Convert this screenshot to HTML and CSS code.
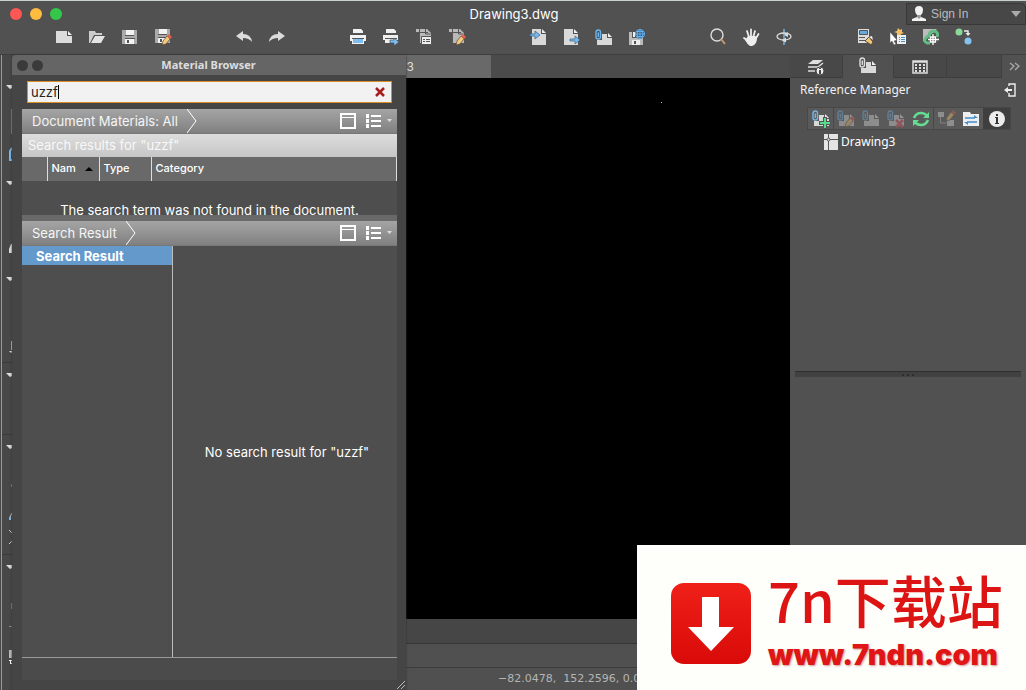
FILE: index.html
```html
<!DOCTYPE html>
<html lang="en">
<head>
<meta charset="utf-8">
<title>Drawing3.dwg</title>
<link rel="stylesheet" href="styles.css">
</head>
<body>
<svg class="defs" aria-hidden="true">
  <defs>
    <g id="page"><path fill="#dcdcdc" d="M2 4h11v5h5v7H2z"/><path fill="#eee" d="M14 4l4 4h-4z"/></g>
    <g id="floppy"><path fill="#aaa" d="M2 2h15v14H2z"/><path fill="#f2f2f2" d="M6 2h8v5H6zM5 11h9v5H5z"/><path fill="#555" d="M5 7h9v1H5zM7 12h2v3H7zM5 10h10v1H5z"/></g>
    <g id="pencil"><path fill="#f3c97d" stroke="#5a4630" stroke-width=".7" d="M9 18l1-4 4-5 3 3-4 5z"/><path fill="#df634f" d="M14 9l2-2 3 3-2 2z"/></g>
    <g id="clip"><path fill="none" stroke-width="1.400" d="M6.500 9V4.500q0-2.500-2.200-2.500T2 4.500V9q0 2 2.200 2t2.300-2M4.300 4.500v4.500"/></g>
    <g id="sheet"><path fill="#d9d9d9" d="M8 6h5v4h5v7H3v-5h5z"/><path fill="#eee" d="M14 5l4 4h-4z"/></g>
    <g id="grid"><path fill="#b9b9b9" d="M2 2h11l4 4v10H5V5H2z"/><path fill="none" stroke="#555" d="M5.500 1v16M2 5.500h12M11.500 2v5h5"/></g>
    <g id="list-window"><rect x="1" y="1" width="14" height="14" fill="none" stroke="#fff" stroke-width="2"/><path fill="#fff" d="M1 4h14v1H1z"/></g>
    <g id="list-rows"><path fill="#fff" d="M0 1h3v4H0zM0 6h3v4H0zM0 11h3v4H0zM5 2h10v2H5zM5 7h10v2H5zM5 12h10v2H5z"/><path fill="#ddd" d="M21 6h5l-2.500 3z"/></g>
  </defs>
</svg>
<div class="app">
  <header class="header">
    <div class="titlebar">
      <div class="lights"><button class="light red" aria-label="Close"></button><button class="light yellow" aria-label="Minimize"></button><button class="light green" aria-label="Zoom"></button></div>
      <h1 class="doc-title">Drawing3.dwg</h1>
      <button class="signin">
        <svg width="16" height="16" viewBox="0 0 16 16"><path fill="#f2f2f2" d="M8 0q4 0 4 4 0 3-2 5v2l5 2v2H1v-2l5-2V9Q4 7 4 4q0-4 4-4z"/><path fill="#999" d="M6 9h4v2L8 13l-2-2z"/></svg>
        <span>Sign In</span>
        <svg class="signin-caret" width="10" height="6"><path fill="#aaa" d="M0 0h10L5 6z"/></svg>
      </button>
    </div>
    <nav class="toolbar" aria-label="Toolbar">
      <div class="group">
        <button aria-label="New"><svg viewBox="0 0 20 20"><use href="#page"/></svg></button>
        <button aria-label="Open"><svg viewBox="0 0 20 20"><path fill="#ccc" d="M2 4h6l1 2h6v2H7l-4 8H2z"/><path fill="#e4e4e4" d="M8 9h10l-4 7H4z"/></svg></button>
        <button aria-label="Save"><svg viewBox="0 0 20 20"><use href="#floppy" y="1"/></svg></button>
        <button aria-label="Save as"><svg viewBox="0 0 20 20"><use href="#floppy"/><use href="#pencil"/></svg></button>
      </div>
      <div class="group">
        <button aria-label="Undo"><svg viewBox="0 0 20 20"><path fill="#dcdcdc" d="M2 9l7-5v3q8 0 9 8-3-4-9-4v3z"/></svg></button>
        <button aria-label="Redo"><svg viewBox="0 0 20 20"><path fill="#dcdcdc" d="M18 9l-7-5v3q-8 0-9 8 3-4 9-4v3z"/></svg></button>
      </div>
      <div class="group">
        <button aria-label="Print"><svg viewBox="0 0 20 20"><path fill="#f2f2f2" d="M5 2h8l2 2v3H5zM2 8h16v6H2zM4 13h12v4H4z"/><path fill="#555" d="M4 6h12v1H4zM4 11h12v1H4z"/><path fill="#7dbdf0" d="M5 12h10v4H5z"/></svg></button>
        <button aria-label="Batch print"><svg viewBox="0 0 20 20"><path fill="#eee" d="M5 2h8l2 2v3H5zM2 8h15v5H2zM4 12h6v4H4z"/><path fill="#555" d="M4 6h12v1H4zM4 11h12v1H4z"/><path fill="#7dbdf0" stroke="#4a5258" stroke-width=".7" d="M9 13h4v-2l5 4-5 4v-3H9z"/></svg></button>
        <button aria-label="Page setup"><svg viewBox="0 0 20 20"><use href="#grid"/><path fill="#eee" stroke="#555" d="M7.500 9.500h10v8h-10z"/><path fill="#555" d="M9 12h2v1H9zM12 12h4v1h-4zM9 14h2v1H9zM12 14h4v1h-4z"/></svg></button>
        <button aria-label="Edit layout"><svg viewBox="0 0 20 20"><use href="#grid"/><use href="#pencil"/></svg></button>
      </div>
      <div class="group">
        <button aria-label="Import"><svg viewBox="0 0 20 20"><path fill="#d9d9d9" d="M4 2h9v5h5v11H4z"/><path fill="#eee" d="M14 2l4 4h-4z"/><path fill="#78baf0" stroke="#356187" stroke-width=".7" d="M2 7h5V4l5 4-5 4v-3H2z"/></svg></button>
        <button aria-label="Export"><svg viewBox="0 0 20 20"><path fill="#d9d9d9" d="M3 2h9v5h5v11H3z"/><path fill="#eee" d="M13 2l4 4h-4z"/><path fill="#78baf0" stroke="#356187" stroke-width=".7" d="M9 12h5V9l5 4-5 4v-3H9z"/></svg></button>
        <button aria-label="Attach"><svg viewBox="0 0 20 20"><use href="#sheet" y="1"/><use href="#clip" y="1" stroke="#6eb4ea"/></svg></button>
        <button aria-label="Save to web"><svg viewBox="0 0 20 20"><path fill="#bbb" d="M2 5h14v13H2z"/><path fill="#555" d="M5 5h5v6H5z"/><path fill="#eee" d="M6 5h2v5H6zM5 13h8v5H5z"/><path fill="#555" d="M7 14h2v3H7z"/><circle cx="13" cy="7" r="5" fill="#315878"/><circle cx="13" cy="7" r="4.500" fill="none" stroke="#66aee8"/><path fill="none" stroke="#66aee8" d="M8.500 7h9M9 4.500h8M9 9.500h8M13 2v10M11 3q-2 4 0 8M15 3q2 4 0 8"/></svg></button>
      </div>
      <div class="group">
        <button aria-label="Zoom"><svg viewBox="0 0 20 20"><circle cx="9" cy="8" r="6" fill="none" stroke="#ddd" stroke-width="1.400"/><path stroke="#c79a6c" stroke-width="2" d="M13 12l4 5"/></svg></button>
        <button aria-label="Pan"><svg viewBox="0 0 20 20"><path fill="none" stroke="#eee" stroke-width="1.800" stroke-linecap="round" d="M8 10L6 4M10 9V2.500M12.500 9L14 4M14.500 12l3-5M7 14l-4-3"/><path fill="#eee" d="M7 9h7l2 1q0 8-5 9H9q-3-2-5-6z"/></svg></button>
        <button aria-label="Orbit"><svg viewBox="0 0 20 20"><path stroke="#78b5df" stroke-width="1.500" d="M10 2v16"/><ellipse cx="10" cy="9.500" rx="7" ry="3.500" fill="none" stroke="#ddd" stroke-width="1.300"/><path fill="#ddd" d="M14 5v5l-4-2zM12 10.500v5l-4-2z"/></svg></button>
      </div>
      <div class="group">
        <button aria-label="Match properties"><svg viewBox="0 0 20 20"><path fill="#ddd" d="M3 2h11v14H3z"/><path fill="#65abdd" stroke="#555" d="M4.500 3.500h8v4h-8z"/><path fill="#555" d="M4 10h6v1H4zM4 13h6v1H4z"/><path fill="#f0c778" stroke="#5d4e3a" d="M10 14l4-4 4 5-2 3q-2-2-6-4z"/><path fill="#eee" d="M14 10l3-1 1 4z"/></svg></button>
        <button aria-label="Quick select"><svg viewBox="0 0 20 20"><path fill="#f2bf65" d="M10 1l2 2 2-1v3l2 1-3 1-1 2-3-1V6L6 5l3-1z"/><path fill="#eee" d="M9 8h9v9H9z"/><path fill="#4c91c4" d="M11 10h1v1h-1zM13 10h4v1h-4zM11 12h1v1h-1zM13 12h4v1h-4zM11 14h1v1h-1zM13 14h4v1h-4z"/><path fill="#fff" stroke="#555" stroke-width=".5" d="M2 5l7 8-3 1 2 3-2 1-2-4-2 2z"/></svg></button>
        <button aria-label="Snap"><svg viewBox="0 0 20 20"><path fill="#bcbcbc" d="M2 2h14L2 15z"/><path fill="none" stroke="#62bd82" stroke-width="3" d="M9 16H6q-4-2-1-5 1-2 3-2 0-5 5-5 5 1 3 6"/><path fill="none" stroke="#fff" stroke-width="1.300" d="M12 7v11M7 12.500h11M9.500 10h5v5h-5z"/></svg></button>
        <button aria-label="Convert"><svg viewBox="0 0 20 20"><circle cx="5" cy="5" r="3.500" fill="#8bd998"/><circle cx="14" cy="14" r="3.500" fill="#84c3f0"/><path fill="none" stroke="#eee" stroke-width="1.400" d="M10 4h4v3"/><path fill="#eee" d="M11.500 6h5L14 9z"/></svg></button>
      </div>
    </nav>
  </header>

  <div class="main">
    <aside class="rail">
      <svg width="13" height="635" viewBox="0 55 13 635">
        <path fill="#999" d="M1 55h1v635H1z"/>
        <path fill="#ddd" d="M6 85h6v3l-2 1zM6 181h6v3l-2 1zM6 277h6v3l-2 1zM6 373h6v3l-2 1zM6 445h6v3l-2 1zM6 565h6v3l-2 1z"/>
        <path fill="#888" d="M11 109h1v25h-1zM11 484h1v3h-1zM11 603h1v6h-1zM9 626h3v1H9z"/>
        <path fill="none" stroke="#7ab9ea" stroke-width="2" d="M12 148l-2 3v9h2"/>
        <path fill="#ddd" d="M11 244h1v9H9v-4zM9 351h3v1l-1 1z"/><path fill="#d6cf8a" d="M11 341h1v9h-1z"/>
        <path stroke="#ccc" d="M12 513l-2 4M9 530l3 3M9 544l3-3"/><path fill="#7ab9ea" d="M9 517h2v3H9z"/>
        <path fill="#bbb" d="M9 650h3v8H9z"/><path fill="#fff" d="M9 660h3v1h-1v2h1v1h-2v-3H9z"/>
        <path fill="#3b3b3b" d="M2 362h11v1H2zM2 434h11v1H2zM2 554h11v1H2z"/>
      </svg>
    </aside>

    <main class="workspace">
      <div class="doc-tabs"><button class="doc-tab">3</button></div>
      <div class="canvas" aria-label="Drawing canvas"><span class="point"></span></div>
      <div class="canvas-foot"></div>
      <div class="command-line"></div>
      <footer class="coords">−82.0478,&nbsp; 152.2596, 0.0</footer>
    </main>

    <aside class="side">
      <div class="side-tabs">
        <button aria-label="Layers"><svg viewBox="0 0 20 20"><path fill="#ddd" d="M7 3h10l-5 4H2z"/><path fill="none" stroke="#ddd" stroke-width="1.500" d="M2 10h10l5-4M2 14h7"/><circle cx="14" cy="14" r="4" fill="#eee" stroke="#484848"/><path fill="#444" d="M13 11h2v1h-2zM13 13h2v4h-2z"/></svg></button>
        <button class="current" aria-label="Reference manager"><svg viewBox="0 0 20 20"><use href="#sheet" y="-1"/><use href="#clip" y="-1" stroke="#ddd"/></svg></button>
        <button aria-label="Tool sets"><svg viewBox="0 0 20 20"><path fill="none" stroke="#ddd" stroke-width="1.500" d="M3 4h14v12H3zM3 5h14"/><path fill="#ddd" d="M5 7h2v2H5zM9 7h2v2H9zM13 7h2v2h-2zM5 10h2v2H5zM9 10h2v2H9zM13 10h2v2h-2zM5 13h2v2H5zM9 13h2v2H9zM13 13h2v2h-2z"/></svg></button>
        <span class="blank"></span>
        <button class="more" aria-label="More"><svg viewBox="0 0 20 20"><path fill="none" stroke="#aaa" stroke-width="1.300" d="M6 6l4 3-4 4M11 6l4 3-4 4"/></svg></button>
      </div>
      <div class="side-head">
        <h2>Reference Manager</h2>
        <button aria-label="Collapse"><svg width="14" height="16" viewBox="0 0 14 16"><path fill="none" stroke="#eee" stroke-width="1.400" d="M6 4V2h6v12H6v-3"/><path fill="#eee" d="M1 8l4-3v2h4v2H5v2z"/></svg></button>
      </div>
      <div class="ref-tools">
        <button aria-label="Attach reference"><svg viewBox="0 0 20 20"><use href="#sheet"/><use href="#clip" stroke="#75b5e6"/><path stroke="#51555a" stroke-width="4" d="M14 8v12M8 14h12"/><path stroke="#58dc86" stroke-width="2" d="M14 9v10M9 14h10"/></svg></button>
        <button class="off split" aria-label="Edit reference"><svg viewBox="0 0 20 20"><use href="#sheet"/><use href="#clip" stroke="#75b5e6"/><use href="#pencil"/></svg></button>
        <button class="off" aria-label="Open reference"><svg viewBox="0 0 20 20"><use href="#sheet"/><use href="#clip" stroke="#75b5e6"/></svg></button>
        <button class="off" aria-label="Detach reference"><svg viewBox="0 0 20 20"><use href="#sheet"/><use href="#clip" stroke="#75b5e6"/><path stroke="#e35260" stroke-width="2.500" d="M10 11l7 7M17 11l-7 7"/></svg></button>
        <button aria-label="Refresh"><svg viewBox="0 0 20 20"><path fill="none" stroke="#65dc91" stroke-width="2.500" d="M3 9q2-5 7-5 4 0 6 3M17 11q-2 5-7 5-4 0-6-3"/><path fill="#65dc91" d="M18 3v6h-6zM2 17v-6h6z"/></svg></button>
        <button class="off split" aria-label="Change path"><svg viewBox="0 0 20 20"><path fill="#ddd" d="M2 3h6v5H2zM11 11h7v6h-7z"/><path fill="none" stroke="#bbb" d="M4.500 8v6h6"/><use href="#pencil" x="1" y="-6"/></svg></button>
        <button aria-label="Show tree"><svg viewBox="0 0 20 20"><path fill="#eee" d="M2 3h7l1 2h8v12H2z"/><path fill="none" stroke="#428ccc" stroke-width="1.400" d="M4 9h10M6 13h10"/><path fill="#428ccc" d="M13 6l4 3h-4zM7 16l-4-3h4z"/></svg></button>
        <button class="pressed" aria-label="Details"><svg viewBox="0 0 20 20"><circle cx="10" cy="10" r="8" fill="#ececec"/><path fill="#333" d="M9 5h2v2H9zM8 8h3v6h1v1H8v-1h1V9H8z"/></svg></button>
      </div>
      <div class="ref-item"><svg width="14" height="16" viewBox="0 0 14 16"><path fill="#e4e4e4" d="M0 0h14v16H0z"/><path fill="none" stroke="#555" d="M4.500 0v16M0 5.500h14"/><circle cx="4.500" cy="5.500" r="1.500" fill="#ddd" stroke="#555"/></svg><span>Drawing3</span></div>
      <div class="splitter"><i></i><i></i><i></i></div>
    </aside>
  </div>

  <section class="palette" aria-label="Material Browser">
    <header class="palette-title">
      <button class="dot" aria-label="Close palette"></button><button class="dot" aria-label="Minimize palette"></button>
      <h2>Material Browser</h2>
    </header>
    <div class="palette-body">
      <div class="search">
        <input type="text" value="uzzf" aria-label="Search materials">
        <span class="caret"></span>
        <button aria-label="Clear search"><svg width="12" height="12" viewBox="0 0 12 12"><path stroke="#a61e1e" stroke-width="2.500" d="M2 2l8 8M10 2l-8 8"/></svg></button>
      </div>
      <div class="crumb">
        <h3>Document Materials: All</h3>
        <svg class="chevron" width="10" height="24" viewBox="0 0 10 24"><path fill="none" stroke="#fff" d="M0 0l9 12-9 12"/></svg>
        <div class="views"><button aria-label="Panel view"><svg width="16" height="16"><use href="#list-window"/></svg></button><button aria-label="List view"><svg width="26" height="16"><use href="#list-rows"/></svg></button></div>
      </div>
      <p class="results-for">Search results for "uzzf"</p>
      <table class="materials">
        <thead><tr><th class="c-icon"></th><th class="c-name">Nam <svg width="8" height="4"><path d="M0 4h8L4 0z"/></svg></th><th class="c-type">Type</th><th>Category</th></tr></thead>
      </table>
      <p class="not-found">The search term was not found in the document.</p>
      <div class="crumb">
        <h3>Search Result</h3>
        <svg class="chevron" width="10" height="24" viewBox="0 0 10 24"><path fill="none" stroke="#fff" d="M0 0l9 12-9 12"/></svg>
        <div class="views"><button aria-label="Panel view"><svg width="16" height="16"><use href="#list-window"/></svg></button><button aria-label="List view"><svg width="26" height="16"><use href="#list-rows"/></svg></button></div>
      </div>
      <div class="library">
        <div class="tree"><button>Search Result</button></div>
        <p class="empty">No search result for "uzzf"</p>
      </div>
      <div class="palette-foot"></div>
    </div>
    <svg class="grip" width="8" height="8"><path stroke="#bbb" d="M0 8l8-8M4 8l4-4"/></svg>
  </section>

  <div class="badge">
    <svg width="82" height="84" viewBox="0 0 82 84"><defs><linearGradient id="red" x2="0" y2="1"><stop stop-color="#ef2018"/><stop offset="1" stop-color="#d90b09"/></linearGradient></defs><rect x="1" y="2" width="80" height="81" rx="13" fill="url(#red)"/><path fill="#fff" d="M32 16h17v30h15L41 70 18 46h14z"/></svg>
    <div class="badge-text"><strong>7n下载站</strong><a href="#">www.7ndn.com</a></div>
  </div>
</div>
</body>
</html>
```
FILE: styles.css
```css
* { box-sizing: border-box; }
body { margin: 0; background: #505050; color: #fff; font: 13px/16px Inter, "Liberation Sans", sans-serif; }
h1, h2, h3, p { margin: 0; font-size: inherit; font-weight: 400; }
button { display: flex; align-items: center; justify-content: center; padding: 0; border: 0; background: none; color: inherit; font: inherit; }
svg { display: block; flex: none; }
.defs { position: absolute; width: 0; height: 0; }
.app { position: relative; display: flex; flex-direction: column; min-height: 100vh; overflow: hidden; }

.header { height: 54px; border-top: 1px solid #c5d4d2; background: #515151; }
.titlebar { display: grid; grid-template-columns: 1fr auto 1fr; align-items: center; height: 22px; }
.lights { display: flex; gap: 8px; padding: 2px 0 0 10px; }
.light { width: 12px; height: 12px; border-radius: 50%; }
.red { background: #fc5753; }
.yellow { background: #fdbc40; }
.green { background: #34c84a; }
.doc-title { padding: 2px 0 0 2px; }
.signin { justify-self: end; justify-content: flex-start; gap: 4px; width: 120px; height: 22px; margin-top: 2px; padding: 0 4px; border: 1px solid #383838; border-top-right-radius: 5px; background: #474747; color: #bbb; font: 12px/16px "Liberation Sans", sans-serif; }
.signin-caret { margin-left: auto; }
.toolbar { display: flex; gap: 48px; height: 28px; padding-left: 47px; }
.group { display: flex; }
.group button { width: 33px; }
.group svg, .side svg { width: 20px; height: 20px; }

.main { flex: 1; display: grid; grid-template-columns: 13px 1fr 236px; border-top: 1px solid #3f3f3f; }
.rail { overflow: hidden; background: #484848; }
.workspace { display: flex; flex-direction: column; min-width: 0; }
.doc-tabs { height: 23px; background: #4b4b4b; }
.doc-tab { justify-content: flex-end; width: 478px; height: 23px; padding-right: 77px; background: #696969; color: #ddd; font-size: 12px; }
.canvas { flex: 1; background: #000; }
.point { display: block; width: 1px; height: 1px; margin: 24px 0 0 648px; background: #bbb; }
.canvas-foot { height: 24px; background: #464646; }
.command-line { height: 25px; border-top: 1px solid #353535; border-bottom: 1px solid #3c3c3c; }
.coords { height: 22px; padding: 3px 0 0 485px; color: #b5b5b5; font: 11px/16px "DejaVu Sans", sans-serif; white-space: pre; }

.side { background: #515151; }
.side-tabs { display: grid; grid-template-columns: 53px 51px 53px 1fr 24px; height: 23px; border-bottom: 1px solid #3d3d3d; background: #484848; }
.side-tabs > * { border-right: 1px solid #404040; }
.side-tabs .current { height: 23px; background: #515151; }
.side-tabs .more { border-right: 0; background: #515151; }
.side-head { display: flex; align-items: center; justify-content: space-between; height: 23px; padding: 0 9px 0 10px; color: #f0f0f0; font: 12px/16px "Noto Sans", sans-serif; }
.side .side-head svg { width: 14px; height: 16px; }
.ref-tools { display: flex; width: 204px; height: 23px; margin: 6px 0 0 17px; border: 1px solid #474747; background: #5a5a5a; }
.ref-tools button { width: 25px; }
.off svg { opacity: .4; }
.ref-tools .split { border-left: 1px solid #484848; }
.ref-tools .pressed { width: 27px; background: #3f3f3f; }
.ref-item { display: flex; align-items: center; gap: 3px; margin: 4px 0 0 34px; font: 12px/16px "Noto Sans", sans-serif; }
.side .ref-item svg { width: 14px; height: 16px; }
.splitter { display: flex; align-items: center; justify-content: center; gap: 3px; height: 6px; margin: 221px 5px 0; border-top: 1px solid #303030; background: #414141; }
.splitter i { width: 2px; height: 2px; background: #2c2c2c; }

.palette { position: absolute; top: 55px; left: 12px; bottom: 0; display: flex; flex-direction: column; width: 394px; background: #454545; box-shadow: 0 0 2px #333; }
.palette-title { display: flex; align-items: center; gap: 4px; height: 20px; padding-left: 5px; border-radius: 4px 0 0 0; background: #656565; }
.dot { width: 11px; height: 11px; border-radius: 50%; background: #3a3a3a; }
.palette-title h2 { flex: 1; padding-right: 36px; color: #ddd; font: bold 11px/16px "Noto Sans", sans-serif; text-align: center; }
.palette-body { flex: 1; display: flex; flex-direction: column; margin: 6px 9px 10px 10px; }
.search { position: relative; flex: none; display: flex; align-items: center; height: 22px; margin: 0 5px 6px; padding: 0 5px 0 3px; border: 1px solid #d98f24; background: #f2f2f2; }
.search input { flex: 1; min-width: 0; padding: 0; border: 0; outline: 0; background: none; color: #222; font: 13px/18px Inter, sans-serif; }
.caret { position: absolute; left: 30px; top: 3px; width: 1px; height: 14px; background: #000; }
.crumb { flex: none; display: flex; align-items: center; gap: 9px; height: 25px; padding: 0 5px 0 10px; border-bottom: 1px solid #777; background: linear-gradient(#a5a5a5, #808080); color: #f5f5f5; }
.views { display: flex; gap: 10px; margin-left: auto; }
.results-for { height: 23px; padding: 3px 6px; background: linear-gradient(#ddd, #c6c6c6); color: #f8f8f8; }
.materials { width: 100%; height: 24px; border-collapse: collapse; border-right: 1px solid #ddd; background: #696969; table-layout: fixed; }
.materials th { padding: 0 4px 2px; border-right: 1px solid #ddd; font-size: 11px; font-weight: 500; text-align: left; }
.materials svg { display: inline; margin: 0 0 1px 6px; }
.c-icon { width: 25px; }
.c-name, .c-type { width: 52px; }
.not-found { height: 40px; padding-top: 21px; border-bottom: 6px solid #696969; background: #4e4e4e; text-align: center; }
.library { flex: 1; display: grid; grid-template-columns: 151px 1fr; border-bottom: 1px solid #999; background: #4e4e4e; }
.tree { border-right: 1px solid #bbb; }
.tree button { justify-content: flex-start; width: 100%; height: 19px; padding-left: 14px; background: #6499cc; font-weight: 700; }
.empty { align-self: center; padding-left: 4px; text-align: center; }
.palette-foot { height: 22px; background: #4b4b4b; }
.grip { position: absolute; right: 1px; bottom: 1px; }

.badge { position: absolute; right: 0; bottom: 0; display: flex; align-items: flex-start; gap: 16px; width: 389px; height: 145px; padding: 36px 0 0 33px; background: #fefefa; }
.badge-text { display: flex; flex-direction: column; color: #dc1414; white-space: nowrap; }
.badge-text strong { margin: -12px 0 10px; font: 500 56px/60px "Noto Sans CJK SC", sans-serif; }
.badge-text a { color: #e01515; font: 900 29px/32px Inter, sans-serif; text-decoration: none; text-shadow: 1px 1px 2px #c99; }
```
